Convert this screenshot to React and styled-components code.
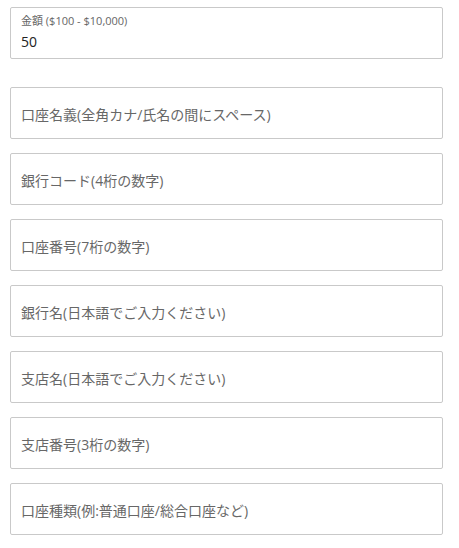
import React from 'react'
import styled, { createGlobalStyle } from 'styled-components'

const Global = createGlobalStyle`
  html, body {
    margin: 0;
    padding: 0;
    background: #fff;
  }
  body {
    font-family: "Open Sans", "Noto Sans CJK JP", sans-serif;
  }
`

const Form = styled.form`
  width: 433px;
  padding: 7px 0 0 10px;
  display: flex;
  flex-direction: column;
  gap: 14px;
`

const AmountBox = styled.label`
  box-sizing: border-box;
  height: 52px;
  margin-bottom: 14px;
  padding: 5px 10px 0;
  border: 1px solid #c9c9c9;
  border-radius: 2px;
  display: flex;
  flex-direction: column;
  gap: 4px;
`

const AmountLabel = styled.span`
  font-size: 11px;
  line-height: 15px;
  color: #666;
`

const AmountInput = styled.input`
  border: none;
  outline: none;
  padding: 0;
  font-family: inherit;
  font-size: 14px;
  line-height: 20px;
  color: #222;
  background: transparent;
`

const Field = styled.input`
  box-sizing: border-box;
  width: 100%;
  height: 52px;
  margin: 0;
  padding: 3px 10px 0;
  border: 1px solid #c9c9c9;
  border-radius: 2px;
  outline: none;
  font-family: "Open Sans", "Noto Sans CJK JP", sans-serif;
  font-size: 14px;
  color: #222;
  background: #fff;

  &::placeholder {
    color: #676767;
    opacity: 1;
  }
`

const fields = [
  '口座名義(全角カナ/氏名の間にスペース)',
  '銀行コード(4桁の数字)',
  '口座番号(7桁の数字)',
  '銀行名(日本語でご入力ください)',
  '支店名(日本語でご入力ください)',
  '支店番号(3桁の数字)',
  '口座種類(例:普通口座/総合口座など)'
]

const App = () => (
  <>
    <Global />
    <Form onSubmit={e => e.preventDefault()}>
      <AmountBox>
        <AmountLabel>金額 ($100 - $10,000)</AmountLabel>
        <AmountInput defaultValue="50" />
      </AmountBox>
      {fields.map(text => (
        <Field key={text} placeholder={text} />
      ))}
    </Form>
  </>
)

export default App
